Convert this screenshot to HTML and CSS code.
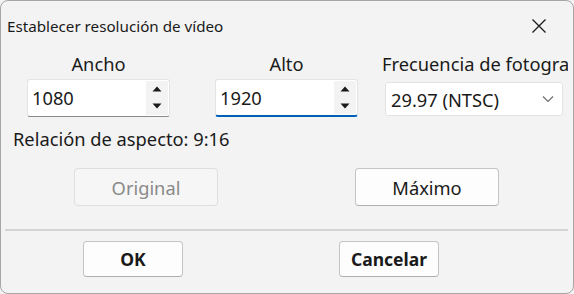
FILE: index.html
```html
<!DOCTYPE html>
<html lang="es">
<head>
    <meta charset="UTF-8">
    <title>Establecer resolución de vídeo</title>
    <link rel="stylesheet" href="styles.css">
</head>
<body>
    <div class="window">
        <div class="titlebar">
            <span class="title">Establecer resolución de vídeo</span>
            <svg class="close" width="16" height="16" viewBox="0 0 16 16">
                <path d="M1.5 1.5 L14.5 14.5 M14.5 1.5 L1.5 14.5" stroke="#1a1a1a" stroke-width="1.3" fill="none"/>
            </svg>
        </div>

        <!-- Size and frame rate -->
        <div class="fields">
            <div class="field">
                <label>Ancho</label>
                <div class="spin">
                    <span class="spin-value">1080</span>
                    <span class="spin-buttons">
                        <svg width="10" height="28" viewBox="0 0 10 28">
                            <path d="M0.5 7.5 L5 2.5 L9.5 7.5 Z M0.5 19.5 L9.5 19.5 L5 24.5 Z" fill="#1a1a1a"/>
                        </svg>
                    </span>
                </div>
            </div>
            <div class="field">
                <label>Alto</label>
                <div class="spin focused">
                    <span class="spin-value">1920</span>
                    <span class="spin-buttons">
                        <svg width="10" height="28" viewBox="0 0 10 28">
                            <path d="M0.5 7.5 L5 2.5 L9.5 7.5 Z M0.5 19.5 L9.5 19.5 L5 24.5 Z" fill="#1a1a1a"/>
                        </svg>
                    </span>
                </div>
            </div>
            <div class="field rate">
                <label>Frecuencia de fotogramas</label>
                <div class="combo">
                    <span>29.97 (NTSC)</span>
                    <svg width="12" height="8" viewBox="0 0 12 8">
                        <path d="M1 1.5 L6 6.5 L11 1.5" stroke="#6a6a6a" stroke-width="1.1" fill="none"/>
                    </svg>
                </div>
            </div>
        </div>

        <div class="aspect">Relación de aspecto: 9:16</div>

        <div class="presets">
            <button class="button original" disabled>Original</button>
            <button class="button maximo">Máximo</button>
        </div>

        <div class="separator"></div>

        <div class="footer">
            <button class="button ok">OK</button>
            <button class="button cancel">Cancelar</button>
        </div>
    </div>
</body>
</html>
```

FILE: styles.css
```css
body {
    margin: 0;
    font-family: "Noto Sans", "Open Sans", sans-serif;
    color: #1a1a1a;
    background-color: #f3f3f3;
}
.window {
    width: 574px;
    height: 294px;
    box-sizing: border-box;
    border: 1px solid #a6a6a6;
    border-radius: 8px;
    background-color: #f3f3f3;
    overflow: hidden;
}
.titlebar {
    height: 47px;
    display: flex;
    align-items: center;
    justify-content: space-between;
    padding: 0 26px 0 6px;
}
.title {
    font-size: 15.2px;
    margin-top: 2px;
}
.close {
    margin-top: 2px;
}
.fields {
    display: flex;
    margin-top: 4px;
    padding-left: 26px;
}
.field {
    width: 143px;
    display: flex;
    flex-direction: column;
    align-items: center;
}
.field + .field {
    margin-left: 45px;
}
.field.rate {
    margin-left: 24px;
    margin-right: 5px;
    flex: 1;
    align-items: flex-start;
    overflow: hidden;
    white-space: nowrap;
}
.field label {
    font-size: 18.3px;
    line-height: 24px;
}
.spin {
    margin-top: 3px;
    width: 143px;
    height: 38px;
    box-sizing: border-box;
    display: flex;
    align-items: stretch;
    background-color: #fff;
    border: 1px solid #e3e3e3;
    border-bottom: 1px solid #8a8a8a;
    border-radius: 3px;
}
.spin.focused {
    border-bottom: 2px solid #005fb8;
}
.spin-value {
    flex: 1;
    padding-left: 4px;
    font-size: 18.3px;
    line-height: 36px;
}
.spin-buttons {
    width: 22px;
    margin: 1px 1px 1px 0;
    background-color: #f3f3f3;
    display: flex;
    align-items: center;
    justify-content: center;
}
.combo {
    margin-top: 6px;
    margin-left: 3px;
    width: 178px;
    height: 34px;
    box-sizing: border-box;
    display: flex;
    align-items: center;
    justify-content: space-between;
    padding: 0 8px 0 5px;
    background-color: #fff;
    border: 1px solid #e3e3e3;
    border-radius: 3px;
    font-size: 18.3px;
}
.aspect {
    margin-top: 10px;
    padding-left: 12px;
    font-size: 18.3px;
    line-height: 24px;
}
.presets {
    display: flex;
    margin-top: 17px;
    padding-left: 73px;
}
.button {
    font-family: inherit;
    color: #1a1a1a;
    background-color: #fdfdfd;
    border: 1px solid #c4c4c4;
    border-bottom-color: #b0b0b0;
    border-radius: 4px;
    padding: 0;
}
.presets .button {
    width: 144px;
    height: 38px;
    font-size: 18.3px;
}
.original {
    color: #8a8a8a;
    background-color: #f6f6f6;
    border-color: #dedede;
}
.maximo {
    margin-left: 137px;
}
.separator {
    margin: 23px 5px 0 4px;
    height: 2px;
    background-color: #d4d4d4;
}
.footer {
    display: flex;
    margin-top: 10px;
    padding-left: 82px;
}
.footer .button {
    width: 100px;
    height: 36px;
    font-size: 17.5px;
    font-weight: bold;
}
.cancel {
    margin-left: 156px;
}
```
